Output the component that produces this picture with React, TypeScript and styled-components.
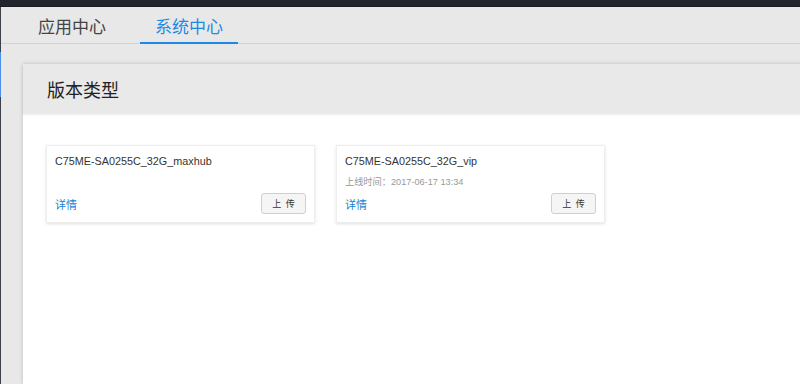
import styled, { createGlobalStyle } from "styled-components";

const GlobalStyle = createGlobalStyle`
  html, body {
    margin: 0;
    padding: 0;
    background: #e8e8e8;
    font-family: "Liberation Sans", "Noto Sans CJK SC", sans-serif;
  }
`;

const Page = styled.div`
  display: flex;
  flex-direction: column;
  width: 800px;
  height: 384px;
  overflow: hidden;
  background: #e8e8e8;
`;

const TopBar = styled.div`
  height: 6px;
  flex-shrink: 0;
  background: #22252e;
  border-bottom: 1px solid #1a1c22;
`;

const Body = styled.div`
  display: flex;
  flex: 1;
  min-height: 0;
`;

const Rail = styled.div`
  width: 1px;
  flex-shrink: 0;
  display: flex;
  flex-direction: column;
  background: #3c414a;
`;

const RailMark = styled.div`
  height: 45px;
  margin-top: 45px;
  background: #4a8fe8;
`;

const Content = styled.div`
  flex: 1;
  display: flex;
  flex-direction: column;
  min-width: 0;
`;

const TabBar = styled.div`
  display: flex;
  gap: 19px;
  height: 36px;
  padding-left: 22px;
  border-bottom: 1px solid #d2d2d2;
  flex-shrink: 0;
`;

const Tab = styled.div<{ $active?: boolean }>`
  display: flex;
  align-items: center;
  padding: 2px 15px 0;
  margin-bottom: -1px;
  font-size: 17px;
  color: ${({ $active }) => ($active ? "#1e88e5" : "#444")};
  border-bottom: 2px solid ${({ $active }) => ($active ? "#1e88e5" : "transparent")};
`;

const Panel = styled.div`
  flex: 1;
  margin: 20px -10px 0 22px;
  display: flex;
  flex-direction: column;
  background: #fff;
  box-shadow: 0 0 4px rgba(0, 0, 0, 0.18);
`;

const PanelHeader = styled.div`
  height: 50px;
  display: flex;
  align-items: center;
  padding-left: 24px;
  background: #e9e9e9;
  box-shadow: 0 1px 2px rgba(0, 0, 0, 0.08);
  font-size: 18px;
  color: #222;
`;

const CardGrid = styled.div`
  display: flex;
  gap: 21px;
  padding: 31px 23px;
`;

const Card = styled.div`
  width: 269px;
  height: 78px;
  box-sizing: border-box;
  padding: 8px;
  display: flex;
  flex-direction: column;
  background: #fff;
  border: 1px solid #eeeeee;
  box-shadow: 0 1px 3px rgba(0, 0, 0, 0.12);
`;

const CardTitle = styled.div`
  font-size: 10.8px;
  line-height: 14px;
  color: #333;
`;

const CardMeta = styled.div`
  margin-top: 8px;
  font-size: 9.2px;
  line-height: 12px;
  color: #999;
`;

const CardFooter = styled.div`
  margin-top: auto;
  display: flex;
  align-items: center;
  justify-content: space-between;
`;

const DetailLink = styled.a`
  font-size: 11px;
  color: #1a7fd4;
  text-decoration: none;
  cursor: pointer;
`;

const UploadButton = styled.button`
  width: 45px;
  height: 21px;
  padding: 0;
  font-family: inherit;
  font-size: 9px;
  color: #333;
  background: #f5f5f5;
  border: 1px solid #cfcfcf;
  border-radius: 3px;
  letter-spacing: 1px;
  text-indent: 1px;
`;

const versions = [
  { name: "C75ME-SA0255C_32G_maxhub" },
  { name: "C75ME-SA0255C_32G_vip", online: "2017-06-17 13:34" },
];

export default function App() {
  return (
    <>
      <GlobalStyle />
      <Page>
        <TopBar />
        <Body>
          <Rail>
            <RailMark />
          </Rail>
          <Content>
            <TabBar>
              <Tab>应用中心</Tab>
              <Tab $active>系统中心</Tab>
            </TabBar>
            <Panel>
              <PanelHeader>版本类型</PanelHeader>
              <CardGrid>
                {versions.map((v) => (
                  <Card key={v.name}>
                    <CardTitle>{v.name}</CardTitle>
                    {v.online && <CardMeta>上线时间：{v.online}</CardMeta>}
                    <CardFooter>
                      <DetailLink>详情</DetailLink>
                      <UploadButton>上 传</UploadButton>
                    </CardFooter>
                  </Card>
                ))}
              </CardGrid>
            </Panel>
          </Content>
        </Body>
      </Page>
    </>
  );
}
